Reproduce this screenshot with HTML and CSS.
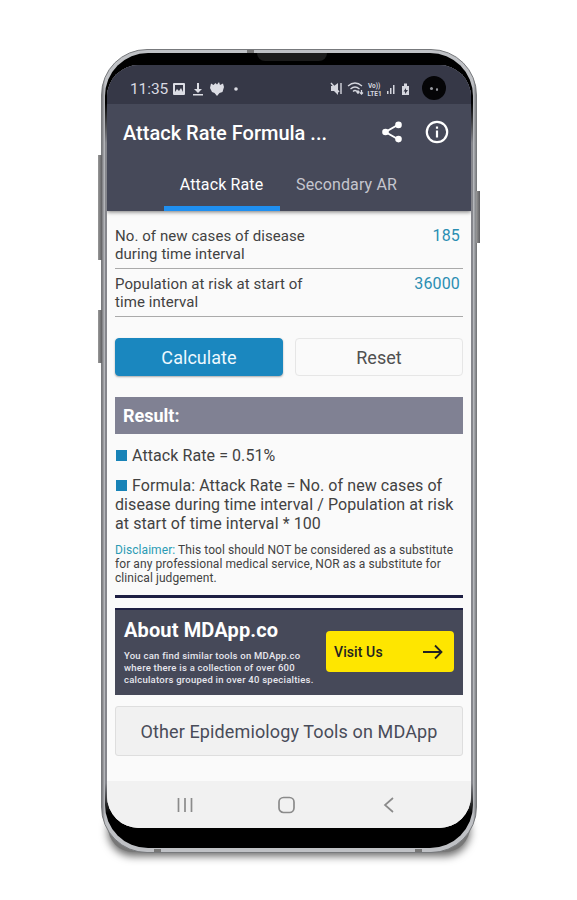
FILE: index.html
```html
<!DOCTYPE html>
<html lang="en">
<head>
<meta charset="utf-8">
<title>Attack Rate Formula</title>
<link rel="stylesheet" href="styles.css">
</head>
<body>
<div class="phone">
  <i class="key key-a"></i><i class="key key-b"></i><i class="key key-c"></i>
  <i class="seam seam-top"></i><i class="seam seam-bottom-l"></i><i class="seam seam-bottom-r"></i>
  <div class="bezel">
    <i class="speaker"></i>
    <div class="screen">
      <header class="header">
        <div class="status">
          <span class="clock">11:35</span>
          <svg class="status-left" width="70" height="18" viewBox="0 0 70 18">
            <path fill="#dcdde4" fill-rule="evenodd" d="M2 3h10q1 0 1 1v10q0 1-1 1H2q-1 0-1-1V4q0-1 1-1zM3 5v7l2-3 2 2 2-3 2 4V5z"/>
            <path fill="#dcdde4" d="M25 3h2v6h3l-4 4-4-4h3zM21 14h10v1.500H21z"/>
            <path fill="#dcdde4" d="M43.500 3l1.500 1.500L47 2l1 3 3-1.500 1 3.500-1.500 5-3 1L45 16l-2.500-3-2.500-1-2-4 1-4.500L41.500 5z"/>
            <circle cx="64" cy="9" r="1.800" fill="#dcdde4"/>
          </svg>
          <svg class="status-right" width="82" height="18" viewBox="0 0 82 18">
            <g fill="#d5d6de">
              <path d="M1 6h3l4-3v12l-4-4H1z"/>
              <path d="M1 3l8 9M11 3v11" stroke="#d5d6de" stroke-width="1.400"/>
              <path d="M60 14V8h1.500v6zM63 14V5h1.500v9zM57 14v-3h1.500v3z"/>
              <path fill-rule="evenodd" d="M72 6h2V3.500h3V6h2v9h-7zm4 2l-2.500 3.500H75V14l3-4h-2z"/>
            </g>
            <g fill="none" stroke="#d5d6de" stroke-width="1.300">
              <path d="M18 6q7-6 14 0M20.500 9q4.500-4 9 0M23 11.500q2-2 4 0M28 14v-3m-1.500 1.500L28 11l1.500 1.500M31.500 10v4m-1.500-1.500l1.500 1.500 1.500-1.500"/>
            </g>
            <text x="38" y="7.500" class="tiny">Vo))</text>
            <text x="37.500" y="15.500" class="tiny">LTE1</text>
          </svg>
          <span class="camera"><i></i><i></i></span>
        </div>
        <div class="appbar">
          <h1 class="title">Attack Rate Formula ...</h1>
          <svg class="share" width="22" height="22" viewBox="0 0 22 22">
            <path d="M17.500 3.500L4.500 11l13 7.500" fill="none" stroke="#fff" stroke-width="2"/>
            <g fill="#fff"><circle cx="17.500" cy="3.900" r="3.300"/><circle cx="4.500" cy="11" r="3.300"/><circle cx="17.500" cy="18.100" r="3.300"/></g>
          </svg>
          <svg class="info" width="24" height="24" viewBox="0 0 24 24">
            <circle cx="12" cy="12" r="10.200" fill="none" stroke="#fff" stroke-width="2.200"/>
            <path fill="#fff" d="M10.900 6.500h2.200v2.200h-2.200zM10.900 10.500h2.200v7h-2.200z"/>
          </svg>
        </div>
        <nav class="tabs">
          <span class="tab active">Attack Rate</span>
          <span class="tab">Secondary AR</span>
        </nav>
      </header>
      <main class="content">
        <div class="field"><span>No. of new cases of disease<br>during time interval</span><span class="value">185</span></div>
        <div class="field"><span>Population at risk at start of<br>time interval</span><span class="value">36000</span></div>
        <div class="buttons"><span class="btn primary">Calculate</span><span class="btn">Reset</span></div>
        <h2 class="result">Result:</h2>
        <p class="item first"><i class="square"></i>Attack Rate = 0.51%</p>
        <p class="item"><i class="square"></i>Formula: Attack Rate = No. of new cases of<br>disease during time interval / Population at risk<br>at start of time interval * 100</p>
        <p class="disclaimer"><span>Disclaimer:</span> This tool should NOT be considered as a substitute<br>for any professional medical service, NOR as a substitute for<br>clinical judgement.</p>
        <section class="about">
          <div class="about-text">
            <h3>About MDApp.co</h3>
            <p>You can find similar tools on MDApp.co<br>where there is a collection of over 600<br>calculators grouped in over 40 specialties.</p>
          </div>
          <span class="visit">Visit Us
            <svg width="22" height="16" viewBox="0 0 22 16"><path d="M1 8h18M13 1.500L19.500 8 13 14.500" fill="none" stroke="#222" stroke-width="1.800"/></svg>
          </span>
        </section>
        <span class="other">Other Epidemiology Tools on MDApp</span>
      </main>
      <footer class="navbar">
        <svg width="18" height="18" viewBox="0 0 18 18"><path d="M2.500 2v14M9 2v14M15.500 2v14" stroke="#8b8b8b" stroke-width="1.700"/></svg>
        <svg width="18" height="18" viewBox="0 0 18 18"><rect x="1" y="1.500" width="15" height="15" rx="4.500" fill="none" stroke="#8b8b8b" stroke-width="1.700"/></svg>
        <svg width="18" height="18" viewBox="0 0 18 18"><path d="M13 2L5 9l8 7" fill="none" stroke="#8b8b8b" stroke-width="1.700"/></svg>
      </footer>
    </div>
  </div>
</div>
</body>
</html>
```
FILE: styles.css
```css
* { box-sizing: border-box; }
body { margin: 0; height: 900px; padding: 49px 0 0 101px; background: #fff; overflow: hidden; font-family: Roboto, "Liberation Sans", sans-serif; color: #424242; white-space: nowrap; }
h1, h2, h3, p { margin: 0; }
svg { display: block; flex: none; }

.phone { position: relative; width: 376px; height: 804px; padding: 3px 3px 4px; border-radius: 46px; background: linear-gradient(90deg, #77777b, #bfc1c5 3px, #bfc1c5 371px, #55575a 376px); border: 1px solid #77797c; }
.phone::before { content: ""; position: absolute; z-index: -1; left: 6px; right: 6px; bottom: 0; height: 50px; border-radius: 36px; background: #777; box-shadow: 0 4px 9px #666; }
.key { position: absolute; width: 4px; background: linear-gradient(90deg, #999, #5f5f62); }
.key-a { left: -4px; top: 105px; height: 105px; }
.key-b { left: -4px; top: 260px; height: 53px; }
.key-c { right: -4px; top: 141px; height: 52px; }
.seam { position: absolute; width: 7px; height: 3px; background: #777; }
.seam-top { left: 145px; top: 0; }
.seam-bottom-l { left: 52px; bottom: 0; }
.seam-bottom-r { right: 54px; bottom: 0; }
.bezel { position: relative; height: 795px; padding: 12px 2px 20px; border-radius: 43px; background: linear-gradient(#000 50px, #85868c 90px, #85868c 730px, #000 760px); overflow: hidden; }
.speaker { position: absolute; left: 152px; top: 0; width: 70px; height: 8px; background: #1c1c1c; border-radius: 0 0 8px 8px; }
.screen { display: flex; flex-direction: column; height: 763px; border-radius: 32px; overflow: hidden; background: #fafafa; }

.header { flex: none; height: 146px; background: #464959; box-shadow: 0 1px 4px #777; position: relative; }
.status { display: flex; align-items: center; height: 39px; padding-left: 23px; padding-top: 9px; background: #363847; color: #d9dae2; }
.clock { font-size: 15.500px; width: 42px; letter-spacing: -.1px; }
.status-right { margin-left: 88px; }
.tiny { font-size: 6.500px; font-weight: 700; fill: #d5d6de; }
.camera { display: flex; align-items: center; justify-content: center; gap: 3px; width: 24px; height: 24px; margin: -2px 0 0 10px; border-radius: 50%; background: #050507; }
.camera i { width: 3px; height: 3px; border-radius: 50%; background: #9799a0; }
.camera i + i { width: 2px; margin-top: 3px; }
.appbar { display: flex; align-items: center; height: 57px; padding: 0 22px 1px 16px; color: #fff; }
.title { flex: 1; padding-top: 1px; font-size: 20px; font-weight: 500; }
.share { margin-right: 22px; }
.tabs { display: flex; height: 50px; padding-left: 57px; color: #c5c6ce; }
.tab { width: 133px; display: flex; justify-content: center; align-items: center; padding-bottom: 4px; font-size: 16px; letter-spacing: .12px; }
.tab.active { width: 116px; color: #fff; border-bottom: 5px solid #1f8ff0; padding: 1px 1px 0 0; }

.content { flex: none; height: 570px; padding: 10px 8px 0; }
.field { display: flex; justify-content: space-between; height: 48px; padding: 6px 3px 0 0; border-bottom: 1px solid #aaa; font-size: 15px; line-height: 18px; letter-spacing: .07px; }
.value { font-size: 16px; letter-spacing: .15px; color: #2a8eb2; }
.buttons { display: flex; gap: 12px; margin-top: 21px; }
.btn { flex: 1; height: 38px; display: flex; align-items: center; justify-content: center; border: 1px solid #e6e6e6; border-radius: 4px; font-size: 18px; letter-spacing: .05px; color: #505050; }
.primary { background: #1a87bf; border-color: #1a87bf; color: #edf8fe; box-shadow: 0 1px 2px #aaa; }
.result { height: 37px; margin-top: 21px; padding-left: 8px; background: #808193; color: #fff; font-size: 18px; line-height: 38px; font-weight: 700; }
.item { margin-top: 11px; font-size: 16px; line-height: 19px; letter-spacing: .08px; }
.item.first { margin-top: 12px; }
.square { display: inline-block; width: 11px; height: 11px; margin: 0 5px 0 1px; background: #1883b7; vertical-align: 0; }
.disclaimer { margin-top: 10px; height: 55px; border-bottom: 3px solid #1e1f43; font-size: 12px; line-height: 14px; letter-spacing: .07px; }
.disclaimer span { color: #2a9bb4; }
.about { display: flex; justify-content: space-between; height: 87px; margin-top: 10px; padding: 8px 9px 0 9px; background: #464959; border-top: 2px solid #1e1f43; color: #fff; }
.about h3 { font-size: 20px; line-height: 24px; font-weight: 700; letter-spacing: .13px; }
.about p { margin-top: 8px; font-size: 9.500px; line-height: 12px; font-weight: 500; letter-spacing: .24px; color: #e7e7ee; }
.visit { display: flex; align-items: center; justify-content: space-between; width: 128px; height: 41px; margin-top: 13px; padding: 0 10px 0 8px; border-radius: 4px; background: #fee600; color: #222; font-size: 14px; font-weight: 500; letter-spacing: .1px; }
.other { display: flex; align-items: center; justify-content: center; height: 50px; margin-top: 11px; border: 1px solid #dedede; border-radius: 3px; background: #f1f1f1; color: #494c59; font-size: 18px; letter-spacing: .12px; }
.navbar { flex: 1; display: flex; justify-content: space-between; align-items: center; padding: 0 73px 0 69px; background: #f1f1f1; }
```
